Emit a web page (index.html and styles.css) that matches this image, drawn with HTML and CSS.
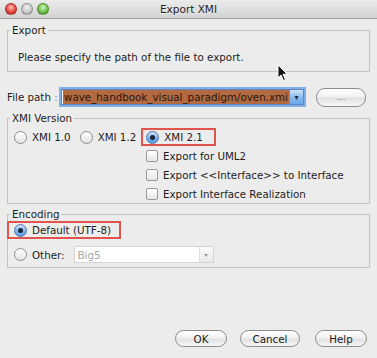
FILE: index.html
```html
<!DOCTYPE html>
<html lang="en">
<head>
  <meta charset="UTF-8">
  <title>Export XMI</title>
  <link rel="stylesheet" href="styles.css">
</head>
<body>
  <div class="window">
    <div class="titlebar">
      <div class="lights">
        <span class="light red"></span>
        <span class="light gray"></span>
        <span class="light green"></span>
      </div>
      <div class="title">Export XMI</div>
      <div></div>
    </div>

    <div class="content">
      <fieldset class="group">
        <legend>Export</legend>
        <p class="hint">Please specify the path of the file to export.</p>
      </fieldset>

      <div class="path-row">
        <label class="path-label">File path <span class="colon">:</span></label>
        <div class="combo focused">
          <div class="combo-text"><span class="selected">wave_handbook_visual_paradigm/oven.xmi</span></div>
          <span class="combo-arrow">&#9662;</span>
        </div>
        <button class="pill browse">...</button>
      </div>

      <fieldset class="group version">
        <legend>XMI Version</legend>
        <div class="radio-row">
          <div class="option"><span class="radio"></span>XMI 1.0</div>
          <div class="option"><span class="radio"></span>XMI 1.2</div>
          <div class="option marked"><span class="radio on"></span>XMI 2.1</div>
        </div>
        <div class="checks">
          <div class="option check-row"><span class="check"></span>Export for UML2</div>
          <div class="option check-row"><span class="check"></span>Export &lt;&lt;Interface&gt;&gt; to Interface</div>
          <div class="option check-row"><span class="check"></span>Export Interface Realization</div>
        </div>
      </fieldset>

      <fieldset class="group encoding">
        <legend>Encoding</legend>
        <div class="option marked default"><span class="radio on"></span>Default (UTF-8)</div>
        <div class="option other-row">
          <span class="radio"></span>Other:
          <div class="combo disabled">
            <div class="combo-text">Big5</div>
            <span class="combo-arrow">&#9662;</span>
          </div>
        </div>
      </fieldset>

      <div class="actions">
        <button class="pill ok">OK</button>
        <button class="pill cancel">Cancel</button>
        <button class="pill help">Help</button>
      </div>
    </div>

    <svg class="cursor" width="12" height="18" viewBox="0 0 12 18">
      <path d="M1 1 L1 14 L4 11 L6.5 16.5 L8.5 15.5 L6 10.2 L10.2 10.2 Z" fill="#111" stroke="#fff" stroke-width="1"/>
    </svg>
  </div>
</body>
</html>
```

FILE: styles.css
```css
* {
  box-sizing: border-box;
}

body {
  margin: 0;
  font-family: 'DejaVu Sans', sans-serif;
  font-size: 10.3px;
  color: #1c1c1c;
  background-color: #ececec;
}

.window {
  position: relative;
  width: 377px;
  height: 358px;
  background-color: #ececec;
  overflow: hidden;
}

/* title bar */
.titlebar {
  height: 19px;
  display: grid;
  grid-template-columns: 1fr auto 1fr;
  align-items: center;
  padding: 0 5px;
  background: linear-gradient(#ebebeb, #d3d3d3);
  border-bottom: 1px solid #9d9d9d;
}

.lights {
  display: flex;
  gap: 4px;
}

.light {
  width: 12px;
  height: 12px;
  border-radius: 50%;
  border: 1px solid rgba(0, 0, 0, 0.25);
}

.light.red {
  background: radial-gradient(circle at 50% 35%, #ffc4bb, #e8473c 55%, #b3261d);
}

.light.gray {
  background: radial-gradient(circle at 50% 35%, #f2f2f2, #c9c9c9 55%, #9e9e9e);
}

.light.green {
  background: radial-gradient(circle at 50% 35%, #d4f7c1, #6fc34a 55%, #3f8f25);
}

.title {
  font-size: 10.5px;
  color: #222;
  text-shadow: 0 1px 0 rgba(255, 255, 255, 0.6);
}

.content {
  padding: 0 7px;
}

/* group boxes */
.group {
  margin: 5px 0 0;
  padding: 0;
  border: 1px solid #c4c4c4;
  min-width: 0;
}

.group legend {
  margin-left: 2px;
  padding: 0 2px;
  line-height: 12px;
}

.hint {
  margin: 0;
  padding: 14px 10px 7px;
  line-height: 14px;
}

/* file path */
.path-row {
  display: flex;
  align-items: center;
  height: 20px;
  margin-top: 15px;
}

.path-label {
  width: 54px;
}

.colon {
  color: #8a8a8a;
}

.combo {
  display: flex;
  align-items: stretch;
  background: #fff;
  border: 1px solid #a5a5a5;
}

.combo-text {
  flex: 1;
  overflow: hidden;
  white-space: nowrap;
  display: flex;
  align-items: center;
}

.combo-arrow {
  width: 14px;
  display: flex;
  align-items: center;
  justify-content: center;
  font-size: 8px;
}

.combo.focused {
  width: 243px;
  height: 16px;
  border-color: #5f86c2;
  box-shadow: 0 0 0 2px #82aee6;
}

.combo.focused .combo-text {
  padding-left: 1px;
}

.selected {
  display: block;
  width: 100%;
  line-height: 14px;
  background-color: #b36a40;
  color: #2a160c;
  padding-left: 1px;
}

.combo.focused .combo-arrow {
  background: linear-gradient(#cfe3fb, #8fbcef 50%, #6aa4ea);
  border-left: 1px solid #6d8fbf;
  color: #1d2e4a;
}

.combo.disabled {
  width: 140px;
  height: 17px;
  margin-left: 4px;
  border-color: #d4d4d4;
}

.combo.disabled .combo-text {
  padding-left: 3px;
  color: #a8a8a8;
}

.combo.disabled .combo-arrow {
  background: linear-gradient(#fafafa, #e9e9e9);
  border-left: 1px solid #dedede;
  color: #8a8a8a;
  font-size: 6px;
}

/* buttons */
.pill {
  height: 17px;
  padding: 0;
  border: 1px solid #8c8c8c;
  border-radius: 9px;
  background: linear-gradient(#ffffff, #f1f1f1 45%, #e2e2e2 55%, #f6f6f6);
  font-family: inherit;
  font-size: 10.3px;
  color: #1c1c1c;
}

.browse {
  width: 50px;
  height: 19px;
  margin-left: 12px;
  color: #777;
  font-size: 9px;
}

/* radios and checkboxes */
.option {
  display: flex;
  align-items: center;
  gap: 5px;
  white-space: nowrap;
}

.radio {
  width: 13px;
  height: 13px;
  border-radius: 50%;
  border: 1px solid #8d8d8d;
  background: linear-gradient(#ffffff, #e4e4e4);
  flex: none;
  display: flex;
  align-items: center;
  justify-content: center;
}

.radio.on {
  border-color: #4f76ad;
  background: linear-gradient(#cfe3fb, #7fb2ee 55%, #5a9be6);
}

.radio.on::after {
  content: "";
  width: 5px;
  height: 5px;
  border-radius: 50%;
  background: #1b2636;
}

.check {
  width: 12px;
  height: 12px;
  border-radius: 2px;
  border: 1px solid #9a9a9a;
  background: linear-gradient(#ffffff, #e6e6e6);
  flex: none;
}

.marked {
  border: 2px solid #e2534d;
}

.radio-row {
  display: flex;
  align-items: center;
  height: 18px;
  margin-top: 4px;
  padding-left: 6px;
  gap: 9px;
}

.radio-row .marked {
  height: 18px;
  padding: 0 11px 0 3px;
  margin-left: -4px;
}

.checks {
  padding-left: 138px;
}

.check-row {
  height: 19px;
}

.encoding {
  margin-top: 4px;
}

.default {
  width: 114px;
  height: 18px;
  margin: 1px 0 0 -1px;
  padding-left: 5px;
}

.other-row {
  height: 17px;
  margin-top: 7px;
  margin-bottom: 4px;
  padding-left: 6px;
}

.actions {
  display: flex;
  justify-content: flex-end;
  margin-top: 62px;
  padding-right: 3px;
}

.ok {
  width: 52px;
}

.cancel {
  width: 60px;
  margin-left: 13px;
}

.help {
  width: 52px;
  margin-left: 15px;
}

.cursor {
  position: absolute;
  left: 277px;
  top: 64px;
}
```
